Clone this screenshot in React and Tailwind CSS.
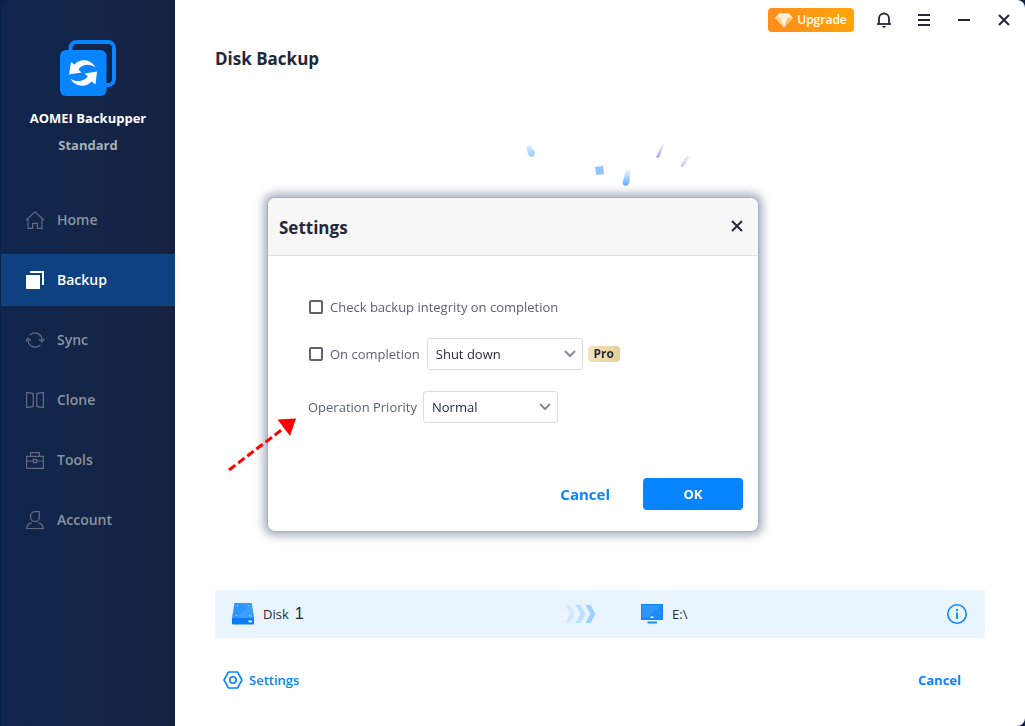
import React from "react";

const HomeIcon = () => (
  <svg width="20" height="20" viewBox="0 0 20 20" fill="none" stroke="currentColor" strokeWidth="1.2" aria-hidden="true">
    <path d="M1 10.2 10 1.8l9 8.4" />
    <path d="M3 8.8V18.4h4.6v-5h4.8v5H17V8.8" />
  </svg>
);

const BackupIcon = () => (
  <svg width="20" height="20" viewBox="0 0 20 20" aria-hidden="true">
    <path d="M1 5h14v14H1z" fill="currentColor" />
    <path d="M5 2h13v13" fill="none" stroke="currentColor" strokeWidth="2" />
  </svg>
);

const SyncIcon = () => (
  <svg width="20" height="20" viewBox="0 0 20 20" fill="none" stroke="currentColor" strokeWidth="1.2" aria-hidden="true">
    <path d="M4.6 5.2A7.2 7.2 0 0 1 17 9.8v1.6" />
    <path d="M15.4 14.8A7.2 7.2 0 0 1 3 10.2V8.6" />
    <path d="M.8 11.4 3 8.2l3 2.6M19.2 8.6 17 11.8l-3-2.6" />
  </svg>
);

const CloneIcon = () => (
  <svg width="20" height="20" viewBox="0 0 20 20" fill="none" stroke="currentColor" strokeWidth="1.2" aria-hidden="true">
    <path d="M1.6 2.6h1.6l5 1v12.8l-5 1H1.6z" />
    <path d="M18.4 2.6h-1.6l-5 1v12.8l5 1h1.6z" />
  </svg>
);

const ToolsIcon = () => (
  <svg width="20" height="20" viewBox="0 0 20 20" fill="none" stroke="currentColor" strokeWidth="1.2" aria-hidden="true">
    <path d="M1.6 6.4h16.8v12H1.6zM5.6 6.2V2.6h8.8v3.6M1.6 11h6.6M11.8 11h6.6" />
    <path d="M8.4 9.4h3.2v3.2H8.4z" />
  </svg>
);

const AccountIcon = () => (
  <svg width="20" height="20" viewBox="0 0 20 20" fill="none" stroke="currentColor" strokeWidth="1.2" aria-hidden="true">
    <path d="M14.4 1.6H10a4.4 4.4 0 0 0-4.4 4.4v1.2a4.4 4.4 0 0 0 8.8 0z" />
    <path d="M6.6 12.6c-2.8.8-4.6 3-5 5.9h16.8c-.4-2.9-2.2-5.1-5-5.9" />
  </svg>
);

const NAV = [
  { label: "Home", Icon: HomeIcon },
  { label: "Backup", Icon: BackupIcon, active: true },
  { label: "Sync", Icon: SyncIcon },
  { label: "Clone", Icon: CloneIcon },
  { label: "Tools", Icon: ToolsIcon },
  { label: "Account", Icon: AccountIcon },
];

function Logo() {
  return (
    <svg width="56" height="56" viewBox="0 0 56 56" aria-hidden="true">
      <path d="M10.5 12V8A6 6 0 0 1 16.500 2H48a6 6 0 0 1 6 6V39a6 6 0 0 1-6 6h-4" fill="none" stroke="#0784ff" strokeWidth="4" />
      <rect x="0" y="10" width="46.500" height="46" rx="6" fill="#0784ff" />
      <g fill="#fff">
        <path d="M35.500 27.500C32 20 20.500 17.500 14.500 24.500L11 22 9 34.500 21.500 32.500 18.500 29.500C21.500 25 29 22.500 35.500 27.500z" />
        <path d="M10.500 38.500C14 46 25.500 48.500 31.500 41.500L35.500 44.500 37 31.500 24.500 33.500 27.800 36.500C24.500 41 17 43 10.500 38.500z" />
      </g>
    </svg>
  );
}

function Sidebar() {
  return (
    <aside className="flex w-[175px] shrink-0 flex-col rounded-tl-lg border-l border-[#06224a] bg-linear-to-r from-[#10254e] via-[#132548] to-[#162140] pt-10">
      <div className="flex flex-col items-center">
        <Logo />
        <p className="mt-3 text-[13px] leading-5 font-bold text-white">AOMEI Backupper</p>
        <p className="mt-[7px] text-[13px] leading-5 font-bold text-[#a9afba]">Standard</p>
      </div>
      <nav className="mt-[39px] flex flex-col gap-2">
        {NAV.map(({ label, Icon, active }) => (
          <a
            key={label}
            href="#"
            aria-current={active ? "page" : undefined}
            className={
              active
                ? "flex h-[52px] items-center gap-3 bg-[#0d4180] pl-6 text-sm font-semibold text-white"
                : "flex h-[52px] items-center gap-3 pl-6 text-sm font-semibold text-[#8b929f]"
            }
          >
            <span className={active ? "text-white" : "text-[#626b80]"}>
              <Icon />
            </span>
            {label}
          </a>
        ))}
      </nav>
    </aside>
  );
}

function TitleBar() {
  return (
    <header className="flex h-10 items-center justify-end pr-px text-[#23293b]">
      <button type="button" className="mr-[10px] flex h-6 w-[86px] items-center justify-center gap-1 rounded bg-linear-to-r from-[#ff8d1c] to-[#ffa406] text-xs font-semibold text-white">
        <svg width="18" height="15" viewBox="0 0 18 15" aria-hidden="true">
          <path d="M4 .5h10L18 5 9 14.500 0 5z" fill="#ffe9c4" />
          <path d="M0 5h5.500L9 14.500z" fill="#ffd08a" />
          <path d="M5.500 5h7L9 14.500z" fill="#fff3dc" />
          <path d="M12.500 5H18l-9 9.500z" fill="#ffc069" />
          <path d="M4 .5 5.500 5 9 .5l3.500 4.500L14 .5z" fill="#fff8ec" />
        </svg>
        Upgrade
      </button>
      <button type="button" aria-label="Notifications" className="flex h-10 w-10 items-center justify-center">
        <svg width="16" height="16" viewBox="0 0 16 16" fill="none" stroke="currentColor" strokeWidth="1.8" aria-hidden="true">
          <path d="M3 11.500V6.500a5 5 0 0 1 10 0v5" />
          <path d="M1 12h14" />
          <path d="M5.500 14h5L8 16z" fill="currentColor" stroke="none" />
        </svg>
      </button>
      <button type="button" aria-label="Menu" className="flex h-10 w-10 items-center justify-center">
        <svg width="12" height="12" viewBox="0 0 12 12" fill="currentColor" aria-hidden="true">
          <path d="M0 0h12v2H0zM0 5h12v2H0zM0 10h12v2H0z" />
        </svg>
      </button>
      <button type="button" aria-label="Minimize" className="flex h-10 w-10 items-center justify-center">
        <svg width="12" height="2" viewBox="0 0 12 2" fill="currentColor" aria-hidden="true">
          <path d="M0 0h12v2H0z" />
        </svg>
      </button>
      <button type="button" aria-label="Close window" className="flex h-10 w-10 items-center justify-center">
        <CloseGlyph />
      </button>
    </header>
  );
}

function CloseGlyph() {
  return (
    <svg width="12" height="12" viewBox="0 0 12 12" fill="none" stroke="currentColor" strokeWidth="2" aria-hidden="true">
      <path d="M1 1l10 10M11 1 1 11" />
    </svg>
  );
}

function Confetti() {
  return (
    <svg className="absolute top-[140px] left-[345px]" width="180" height="56" viewBox="0 0 180 56" aria-hidden="true">
      <defs>
        <linearGradient id="drop" x1="0" y1="0" x2="0" y2="1">
          <stop offset="0" stopColor="#e2f1ff" />
          <stop offset="1" stopColor="#8ec8ff" />
        </linearGradient>
        <linearGradient id="dropDeep" x1="0" y1="0" x2="0" y2="1">
          <stop offset="0" stopColor="#eef6ff" />
          <stop offset="1" stopColor="#5aaaf8" />
        </linearGradient>
        <linearGradient id="streak" x1="0" y1="0" x2="0" y2="1">
          <stop offset="0" stopColor="#eaf6ff" />
          <stop offset="1" stopColor="#aaa2f8" />
        </linearGradient>
        <linearGradient id="streakLight" x1="0" y1="0" x2="0" y2="1">
          <stop offset="0" stopColor="#e8f4ff" />
          <stop offset="1" stopColor="#cfc4fb" />
        </linearGradient>
      </defs>
      <path d="M6 7.500 10 5 14.500 11.500Q15.500 16 12 17 9.500 17 8 13.500z" fill="url(#drop)" />
      <path d="M75 27l8-1 1.200 8-7.800 1z" fill="#93c4ff" />
      <path d="M106 30h4.500l-1.200 12.500Q108 46 105 45.800 102 45 103 41z" fill="url(#dropDeep)" />
      <path d="M142.500 3l1.500 1-4.500 13Q138 19 136 17z" fill="url(#streak)" />
      <path d="M167 15l2.500 2-6 9.500Q161 28 160.500 25z" fill="url(#streakLight)" />
    </svg>
  );
}

function DiskIcon() {
  return (
    <svg width="22" height="22" viewBox="0 0 22 22" aria-hidden="true">
      <path d="M2.500 0h17L22 15H0z" fill="#2f96ff" />
      <path d="M19.500 0 22 15H6z" fill="#3d9eff" />
      <path d="M0 15h22v5.500a1 1 0 0 1-1 1H1a1 1 0 0 1-1-1z" fill="#0a7cf5" />
      <path d="M16.500 17.500h3.500v1.800h-3.500z" fill="#fff" />
      <g fill="#9bd0ff">
        <circle cx="5.500" cy="2.800" r=".8" />
        <circle cx="16.500" cy="2.800" r=".8" />
        <circle cx="4.500" cy="12.500" r=".8" />
        <circle cx="17.500" cy="12.500" r=".8" />
      </g>
    </svg>
  );
}

function MonitorIcon() {
  return (
    <svg width="24" height="20" viewBox="0 0 24 20" aria-hidden="true">
      <path d="M1 0h22v16H1z" fill="#1286ff" />
      <path d="M2 1h20v13H2z" fill="#2f96ff" />
      <path d="M22 1v13H7z" fill="#2089fb" />
      <path d="M10.500 12.500h3v1.500h-3z" fill="#fff" />
      <path d="M7.500 17.500h9.500v2H7.500z" fill="#1f8dff" />
    </svg>
  );
}

function TaskRow() {
  return (
    <section className="grid h-12 grid-cols-[1fr_auto_1fr] items-center bg-[#eaf4ff] pr-[17px] pl-[17px] text-[#252b3c]">
      <div className="flex items-center">
        <DiskIcon />
        <span className="ml-[9px] text-[13px] leading-5 font-medium">Disk</span>
        <span className="ml-[6px] text-base leading-5 font-['Liberation_Sans',sans-serif]">1</span>
      </div>
      <svg width="70" height="18" viewBox="0 0 70 18" aria-hidden="true">
        <path d="M0 0h5l5 9-5 9H0l5-9z" fill="#d3e8ff" />
        <path d="M10.500 0h5l5 9-5 9h-5l5-9z" fill="#b8e0ff" />
        <path d="M20.500 0h5l5 9-5 9h-5l5-9z" fill="#9dd0ff" />
      </svg>
      <div className="flex items-center pl-[5px]">
        <MonitorIcon />
        <span className="ml-2 flex-1 text-[13px] leading-5 font-medium">E:\</span>
        <button type="button" aria-label="Details" className="text-[#0a85ff]">
          <svg width="22" height="22" viewBox="0 0 22 22" fill="none" stroke="currentColor" strokeWidth="1.600" aria-hidden="true">
            <circle cx="11" cy="11" r="9.200" />
            <path d="M11 9.500v6.500M11 6v2" strokeWidth="1.800" />
          </svg>
        </button>
      </div>
    </section>
  );
}

function PageFooter() {
  return (
    <footer className="flex h-[88px] items-center justify-between pr-6 pb-1 pl-2 text-[13px] leading-5 text-[#0a85ff]">
      <button type="button" className="flex items-center gap-[6px] font-semibold">
        <svg width="20" height="20" viewBox="0 0 20 20" fill="none" stroke="currentColor" strokeWidth="1.600" strokeLinejoin="round" aria-hidden="true">
          <path d="M5.500 2h9l4.500 8-4.500 8h-9L1 10z" />
          <circle cx="10" cy="10" r="3.200" />
        </svg>
        Settings
      </button>
      <button type="button" className="font-bold">Cancel</button>
    </footer>
  );
}

function SelectBox({ id, width, children, label }) {
  return (
    <span className={`relative inline-flex ${width}`}>
      <select
        id={id}
        aria-label={label}
        className="h-8 w-full appearance-none rounded-[3px] border border-[#d9dce6] bg-white pr-7 pl-2 text-[13px] leading-5 text-[#252b3c]"
      >
        {children}
      </select>
      <svg className="pointer-events-none absolute top-3 right-[7px]" width="12" height="8" viewBox="0 0 12 8" fill="none" stroke="#848b99" strokeWidth="2" aria-hidden="true">
        <path d="M1 1l5 5 5-5" />
      </svg>
    </span>
  );
}

const CHECKBOX =
  "h-[14px] w-[14px] appearance-none rounded-[2px] border-2 border-[#5b6272] bg-white checked:bg-[#0784ff]";

function SettingsDialog() {
  return (
    <div className="fixed inset-0 flex items-center justify-center pt-[2px] pl-px">
      <div
        role="dialog"
        aria-labelledby="settings-title"
        className="relative w-[492px] rounded-lg border border-[#a7b0c2] bg-white shadow-[0_0_9px_4px_rgba(70,90,125,0.45)]"
      >
        <div className="flex h-[58px] items-center justify-between rounded-t-lg border-b border-[#e1e2e6] bg-[#f7f7f8] pt-1 pr-[15px] pl-[11px] text-[#23293b]">
          <h2 id="settings-title" className="text-[17px] leading-6 font-bold">Settings</h2>
          <button type="button" aria-label="Close" className="pb-1">
            <CloseGlyph />
          </button>
        </div>
        <form className="pr-[15px] pb-[21px] text-[13px] leading-5 text-[#5b6272]" onSubmit={(e) => e.preventDefault()}>
          <div className="flex flex-col gap-[21px] pt-[41px] pl-10">
            <div className="flex items-center gap-[7px] pl-px">
              <input id="check-integrity" type="checkbox" className={CHECKBOX} />
              <label htmlFor="check-integrity">Check backup integrity on completion</label>
            </div>
            <div className="flex items-center gap-[7px] pl-px">
              <input id="on-completion" type="checkbox" className={CHECKBOX} />
              <label htmlFor="on-completion">On completion</label>
              <div className="flex items-center gap-[5px]">
                <SelectBox id="completion-action" label="Action on completion" width="w-[156px]">
                  <option>Shut down</option>
                  <option>Restart</option>
                  <option>Sleep</option>
                </SelectBox>
                <span className="flex h-4 w-8 items-center justify-center rounded bg-linear-to-r from-[#f5e3bb] to-[#e6cf98] text-xs font-bold text-[#252b3c]">
                  Pro
                </span>
              </div>
            </div>
            <div className="flex items-center gap-[6px]">
              <label htmlFor="priority">Operation Priority</label>
              <SelectBox id="priority" width="w-[135px]">
                <option>Normal</option>
                <option>Low</option>
                <option>High</option>
              </SelectBox>
            </div>
          </div>
          <div className="mt-[55px] flex items-center justify-end gap-[33px] font-bold">
            <button type="button" className="text-[15px] text-[#0784ff]">Cancel</button>
            <button type="submit" className="h-8 w-[100px] rounded bg-[#0784ff] text-[13px] text-white">OK</button>
          </div>
        </form>
        <svg className="pointer-events-none absolute top-[218px] -left-10" width="72" height="58" viewBox="0 0 72 58" aria-hidden="true">
          <path d="M1 54 56 12" fill="none" stroke="#ff0000" strokeWidth="3" strokeDasharray="8 3.500" />
          <path d="M68 2.500 49.500 3.500 62 20z" fill="#ff0000" />
        </svg>
      </div>
    </div>
  );
}

export default function App() {
  return (
    <div className="flex min-h-screen bg-[#0b2146] font-['Open_Sans','Noto_Sans',sans-serif]">
      <Sidebar />
      <main className="relative flex min-w-0 flex-1 flex-col rounded-r-lg bg-white">
        <TitleBar />
        <div className="flex flex-1 flex-col px-10">
          <h1 className="mt-[7px] text-[17px] leading-6 font-bold text-[#23293b]">Disk Backup</h1>
          <div className="flex-1" />
          <TaskRow />
          <PageFooter />
        </div>
        <Confetti />
      </main>
      <SettingsDialog />
    </div>
  );
}
